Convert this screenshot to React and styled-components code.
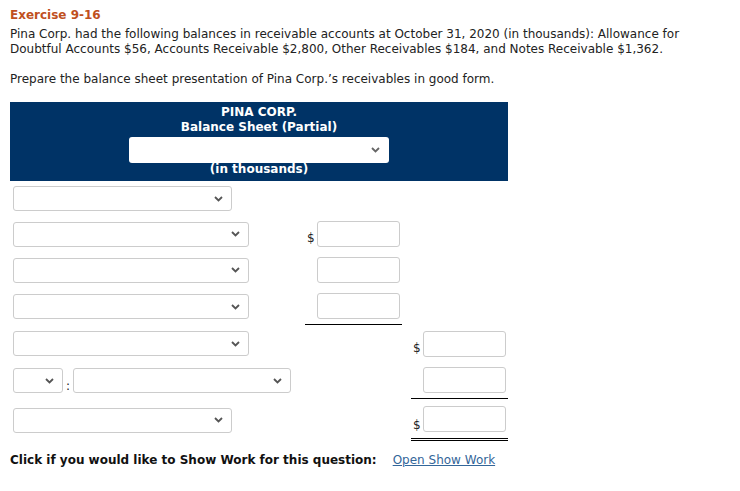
import styled, { createGlobalStyle } from 'styled-components';

const GlobalStyle = createGlobalStyle`
  body {
    margin: 0;
    background: #fff;
    font-family: "DejaVu Sans", Verdana, sans-serif;
    color: #222;
  }
`;

const Page = styled.div`
  width: 740px;
  height: 491px;
  padding: 7px 10px 0;
  box-sizing: border-box;
`;

const Title = styled.h1`
  margin: 0;
  font-size: 12px;
  font-weight: bold;
  color: #c0501e;
  line-height: 16px;
`;

const Para = styled.p`
  margin: ${({ $top }) => $top || 0}px 0 0;
  font-size: 12px;
  line-height: 15px;
  color: #222;
`;

const Header = styled.div`
  margin-top: 15px;
  width: 498px;
  height: 79px;
  background: #003366;
  color: #fff;
  display: flex;
  flex-direction: column;
  align-items: center;
  padding-top: 3px;
  box-sizing: border-box;
  font-size: 12px;
  font-weight: bold;
  line-height: 15px;
`;

const HeaderSelect = styled.div`
  width: 260px;
  height: 26px;
  margin: 2px 0 0;
  background: #fff;
  border-radius: 3px;
  display: flex;
  align-items: center;
  justify-content: flex-end;
  padding-right: 9px;
  box-sizing: border-box;
  line-height: 1;
`;

const Sub = styled.div`
  line-height: 13px;
`;

const Grid = styled.div`
  display: grid;
  grid-template-columns: 286px 97px 97px;
  column-gap: 9px;
  width: 498px;
`;

const Cell = styled.div`
  height: ${({ $h }) => $h}px;
  display: flex;
  align-items: center;
  box-sizing: border-box;
  padding-left: ${({ $pl }) => $pl || 0}px;
  border-bottom: ${({ $rule }) =>
    $rule === 'single' ? '1px solid #000' : $rule === 'double' ? '3px double #000' : 'none'};
`;

const Select = styled.div`
  width: ${({ $w }) => $w}px;
  height: 25px;
  border: 1px solid #cccccc;
  border-radius: 3px;
  background: #fff;
  display: flex;
  align-items: center;
  justify-content: flex-end;
  padding-right: 8px;
  box-sizing: border-box;
  flex-shrink: 0;
`;

const Colon = styled.span`
  font-size: 12px;
  margin: 10px 3px 0 3px;
  align-self: center;
`;

const Dollar = styled.span`
  font-size: 12px;
  width: ${({ $w }) => $w}px;
  align-self: flex-end;
  margin-bottom: ${({ $mb }) => $mb}px;
  color: #222;
`;

const Input = styled.div`
  width: 83px;
  height: 26px;
  border: 1px solid #cccccc;
  border-radius: 3px;
  box-sizing: border-box;
  background: #fff;
`;

const Footer = styled.div`
  margin-top: 12px;
  display: flex;
  align-items: baseline;
  font-size: 12px;
`;

const Strong = styled.span`
  font-weight: bold;
  color: #111;
`;

const LinkText = styled.a`
  margin-left: 16px;
  color: #336699;
  text-decoration: underline;
`;

const Chevron = ({ color = '#555' }) => (
  <svg width="9" height="6" viewBox="0 0 9 6">
    <path d="M1 1l3.5 3.5L8 1" fill="none" stroke={color} strokeWidth="1.8" />
  </svg>
);

const rows = [
  { h: 35, label: [{ w: 219 }] },
  { h: 36, label: [{ w: 236 }], c1: { input: true, dollar: true } },
  { h: 36, label: [{ w: 236 }], c1: { input: true } },
  { h: 37, label: [{ w: 236 }], c1: { input: true, rule: 'single' } },
  { h: 37, label: [{ w: 236 }], c2: { input: true, dollar: true } },
  { h: 37, label: [{ w: 50 }, { colon: true }, { w: 218 }], c2: { input: true, rule: 'single' } },
  { h: 42, label: [{ w: 219 }], c2: { input: true, dollar: true, rule: 'double' } },
];

const Amount = ({ h, cfg }) => {
  if (!cfg) return <Cell $h={h} />;
  return (
    <Cell $h={h} $rule={cfg.rule} $pl={cfg.dollar ? 2 : 12}>
      {cfg.dollar && (
        <Dollar $w={10} $mb={cfg.rule === 'double' ? 6 : 7}>
          $
        </Dollar>
      )}
      <Input />
    </Cell>
  );
};

export default function App() {
  return (
    <Page>
      <GlobalStyle />
      <Title>Exercise 9-16</Title>
      <Para $top={4}>
        Pina Corp. had the following balances in receivable accounts at October 31, 2020 (in thousands): Allowance for
        <br />
        Doubtful Accounts $56, Accounts Receivable $2,800, Other Receivables $184, and Notes Receivable $1,362.
      </Para>
      <Para $top={15}>Prepare the balance sheet presentation of Pina Corp.’s receivables in good form.</Para>
      <Header>
        <div>PINA CORP.</div>
        <div>Balance Sheet (Partial)</div>
        <HeaderSelect>
          <Chevron color="#666" />
        </HeaderSelect>
        <Sub>(in thousands)</Sub>
      </Header>
      <Grid>
        {rows.map((r, i) => (
          <>
            <Cell key={`l${i}`} $h={r.h} $pl={3}>
              {r.label.map((s, j) =>
                s.colon ? (
                  <Colon key={j}>:</Colon>
                ) : (
                  <Select key={j} $w={s.w}>
                    <Chevron />
                  </Select>
                )
              )}
            </Cell>
            <Amount key={`a${i}`} h={r.h} cfg={r.c1} />
            <Amount key={`b${i}`} h={r.h} cfg={r.c2} />
          </>
        ))}
      </Grid>
      <Footer>
        <Strong>Click if you would like to Show Work for this question:</Strong>
        <LinkText>Open Show Work</LinkText>
      </Footer>
    </Page>
  );
}
